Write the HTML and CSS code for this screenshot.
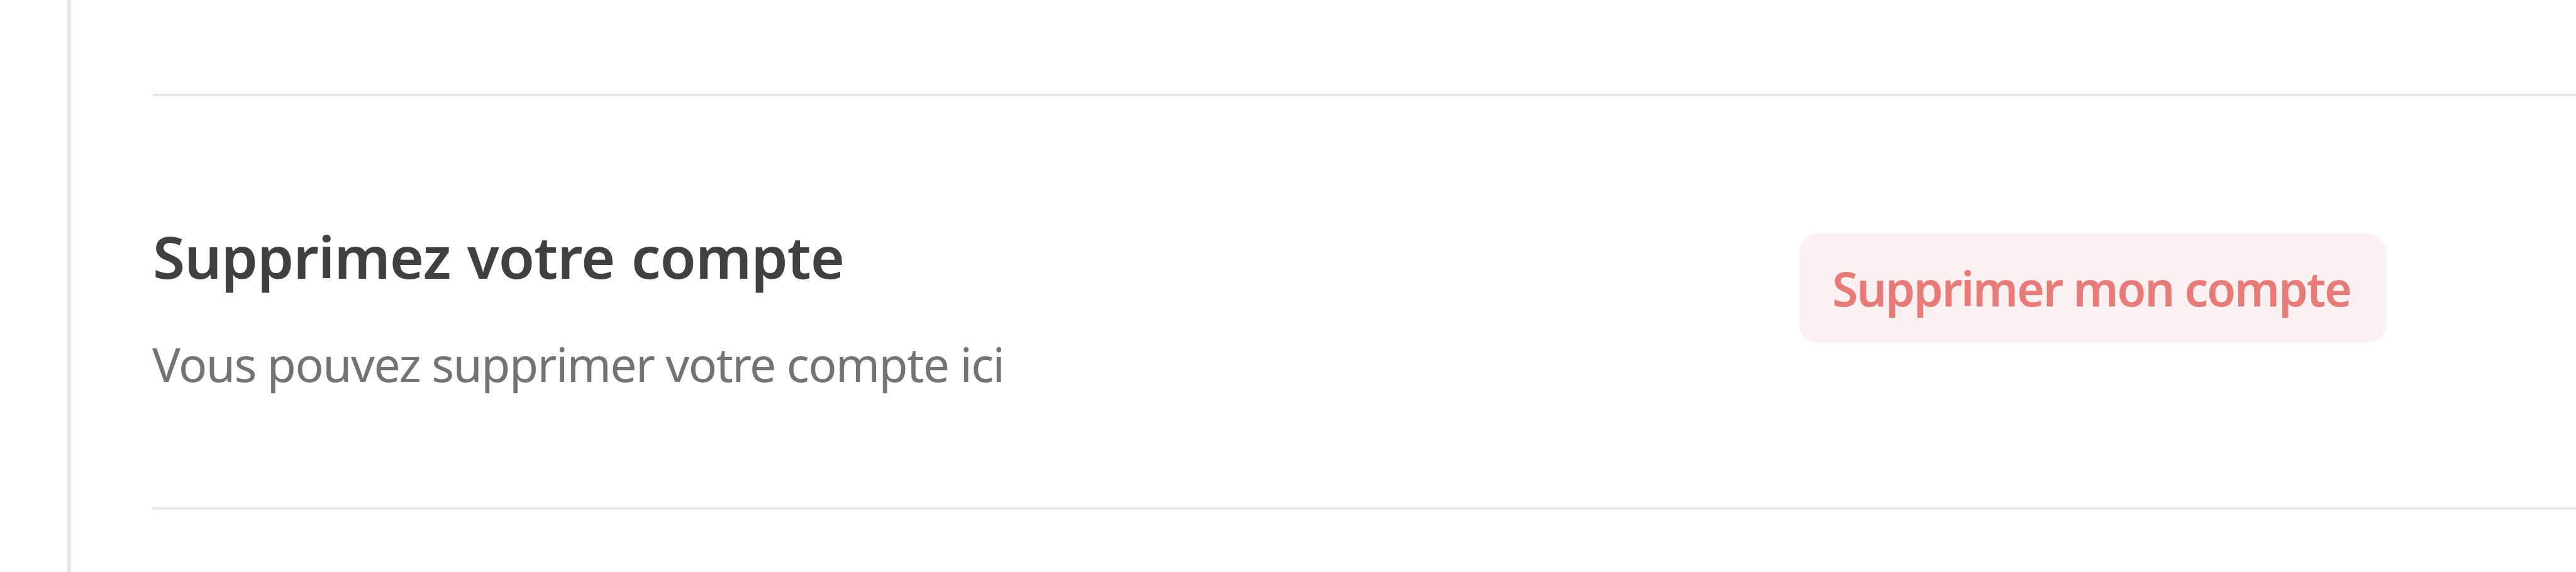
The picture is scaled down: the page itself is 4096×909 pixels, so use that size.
FILE: index.html
```html
<!DOCTYPE html>
<html lang="fr">
<head>
    <meta charset="UTF-8">
    <meta name="viewport" content="width=device-width, initial-scale=1.0">
    <title>Paramètres du compte</title>
    <link rel="stylesheet" href="styles.css">
</head>
<body>

    <aside class="sidebar"></aside>

    <main class="content">
        <!-- Delete account -->
        <section class="setting">
            <div class="setting-text">
                <h2>Supprimez votre compte</h2>
                <p>Vous pouvez supprimer votre compte ici</p>
            </div>
            <button type="button" class="delete-btn">Supprimer mon compte</button>
        </section>
    </main>

</body>
</html>
```
FILE: styles.css
```css
/* Global Styles */
* {
    box-sizing: border-box;
}

body {
    font-family: "Noto Sans", "Open Sans", sans-serif;
    margin: 0;
    height: 909px;
    display: flex;
    background: #fefefe;
    overflow: hidden;
}

.sidebar {
    width: 113px;
    border-right: 5px solid #e6e6e6;
    box-shadow: inset -2px 0 0 #f1f1f1;
}

.content {
    flex: 1;
    padding: 149px 0 0 130px;
}

/* Setting row */
.setting {
    display: flex;
    align-items: flex-start;
    height: 661px;
    border-top: 3px solid #e5e5e5;
    border-bottom: 4px solid #e7e7e7;
    box-shadow: inset 0 1px 0 #f0f0f0;
}

.setting-text {
    width: 2618px;
    padding-top: 192px;
}

h2 {
    margin: 0 0 57px;
    color: #404040;
    font-size: 93px;
    font-weight: 600;
    line-height: 126px;
    letter-spacing: -0.87px;
    word-spacing: 3px;
}

p {
    margin: 0 0 0 -1px;
    color: #737373;
    font-size: 75px;
    line-height: 102px;
    letter-spacing: -1.56px;
}

.delete-btn {
    width: 933px;
    height: 174px;
    margin-top: 219px;
    padding: 0 4px 0 0;
    border: none;
    border-radius: 30px;
    background: #fbf1f0;
    color: #e87b77;
    font-family: inherit;
    font-size: 75px;
    font-weight: 600;
    letter-spacing: -2.15px;
    cursor: pointer;
}
```
